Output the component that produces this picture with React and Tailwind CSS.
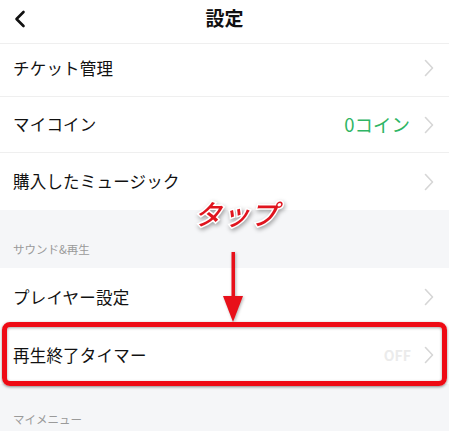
import React from "react";

const Chevron = ({ className = "" }) => (
  <svg width="10" height="18" viewBox="0 0 10 18" className={className}>
    <path d="M1.5 1.5 L8.5 9 L1.5 16.5" fill="none" stroke="#d6d6d6" strokeWidth="1.6" strokeLinecap="round" strokeLinejoin="round" />
  </svg>
);

const Row = ({ label, right, h = "h-[57px]", border = true, extra = "", gap = "gap-[9px]" }) => (
  <div className={`flex items-center justify-between bg-white pl-[13px] pr-[15px] ${h} ${border ? "border-b border-[#efefef]" : ""} ${extra}`}>
    <span className="text-[16.5px] text-[#111] tracking-[0.2px]">{label}</span>
    <div className={`flex items-center ${gap}`}>
      {right}
      <Chevron />
    </div>
  </div>
);

export default function App() {
  return (
    <div
      className="relative w-[449px] h-[431px] overflow-hidden bg-[#f5f6f8]"
      style={{ fontFamily: '"Noto Sans CJK JP", "Noto Sans", sans-serif' }}
    >
      {/* Header */}
      <div className="relative flex items-center justify-center h-[44px] bg-white border-b border-[#efefef]">
        <svg width="14" height="18" viewBox="0 0 14 18" className="absolute left-[13px] top-[10px]">
          <path d="M10.5 2 L3.5 9 L10.5 16" fill="none" stroke="#111" strokeWidth="2.6" strokeLinecap="round" strokeLinejoin="round" />
        </svg>
        <span className="text-[19px] font-bold text-[#111] -mt-[7px]">設定</span>
      </div>

      <Row label="チケット管理" h="h-[53px]" extra="pb-[4px]" />
      <Row
        label="マイコイン"
        h="h-[56px]"
        gap="gap-[14px]"
        right={<span className="text-[18.5px] text-[#2fb565]">0コイン</span>}
      />
      <Row label="購入したミュージック" h="h-[57px]" border={false} />

      {/* Section: sound */}
      <div className="h-[58px] flex items-end pl-[13px] pb-[10px]">
        <span className="text-[11.5px] text-[#9a9a9a]">サウンド&amp;再生</span>
      </div>

      <Row label="プレイヤー設定" h="h-[58px]" border={false} />
      <Row
        label="再生終了タイマー"
        h="h-[58px]"
        border={false}
        gap="gap-[13px]"
        right={<span className="text-[14px] font-semibold text-[#ebebeb]">OFF</span>}
      />

      <div className="pt-[21px] pl-[13px]">
        <span className="text-[11.5px] text-[#9a9a9a]">マイメニュー</span>
      </div>

      {/* Annotation: タップ */}
      <div
        className="absolute left-[194px] top-[199px] text-[28px] font-medium italic text-[#e0141e] leading-none [paint-order:stroke_fill] [-webkit-text-stroke:3px_white] [filter:drop-shadow(1px_2px_2px_rgba(0,0,0,0.35))]"
      >
        タップ
      </div>

      {/* Arrow */}
      <svg width="30" height="72" viewBox="0 0 30 72" className="absolute left-[218px] top-[252px] [filter:drop-shadow(1px_1px_1.5px_rgba(0,0,0,0.3))]">
        <rect x="13.5" y="0" width="3.5" height="50" fill="#e8101a" />
        <path d="M5 44 L25 44 L15 70 Z" fill="#e8101a" />
      </svg>

      {/* Highlight box */}
      <div className="absolute left-[2px] top-[322px] w-[445px] h-[64px] rounded-[8px] border-[5px] border-[#ee0a14] shadow-[0_1px_3px_rgba(0,0,0,0.45),inset_0_1px_3px_rgba(0,0,0,0.35)]" />
    </div>
  );
}
